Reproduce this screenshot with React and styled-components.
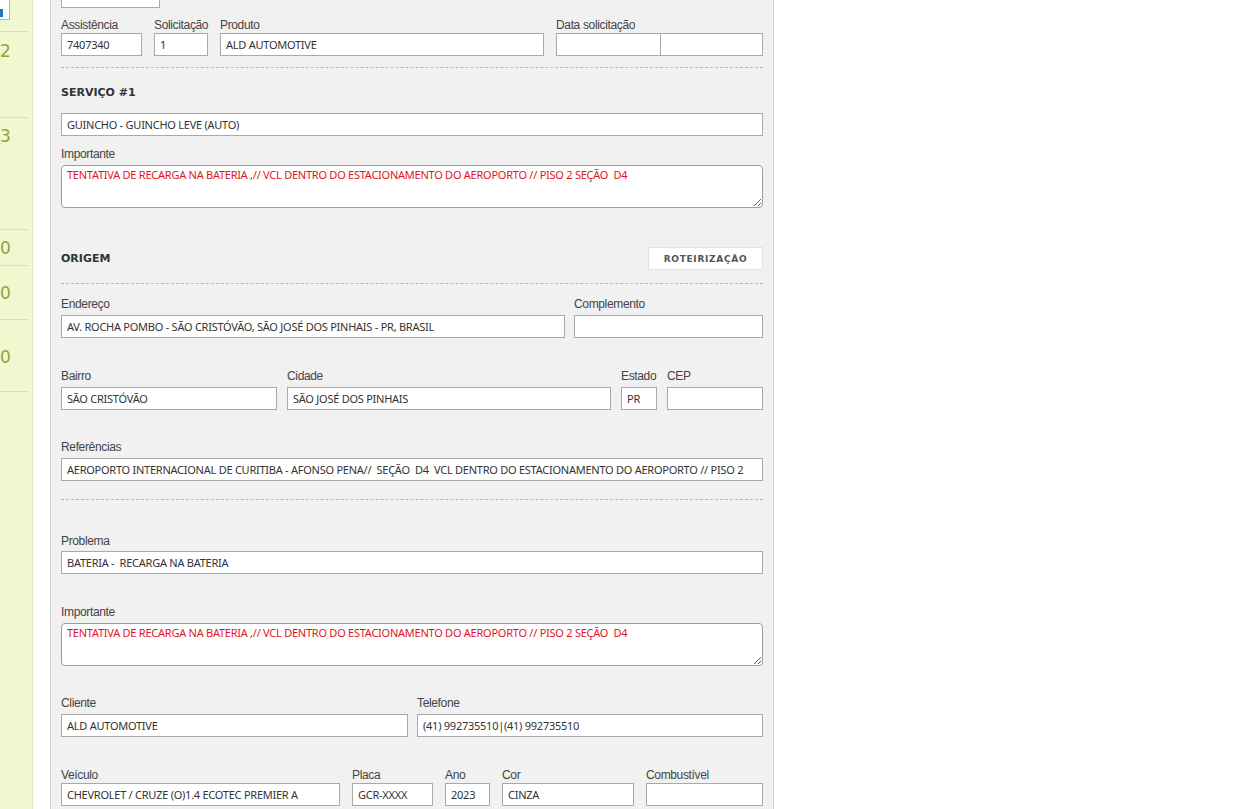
import React from 'react';
import styled, { createGlobalStyle } from 'styled-components';

const GlobalStyle = createGlobalStyle`
  html, body {
    margin: 0;
    padding: 0;
    background: #fff;
  }
  body {
    font-family: "Liberation Sans", Arial, sans-serif;
    overflow: hidden;
  }
`;

const Page = styled.div`
  display: flex;
  align-items: stretch;
  height: 809px;
  overflow: hidden;
`;

const Sidebar = styled.aside`
  width: 32px;
  flex: none;
  background: #f0f8d0;
  border-right: 1px solid #dfe6c4;
  overflow: hidden;
`;

const SideInput = styled.div`
  width: 10px;
  height: 20px;
  background: #fff;
  border: 1px solid #b5b5b5;
  border-left: 0;
  border-top: 0;
  box-sizing: border-box;
  position: relative;
  &::before {
    content: '';
    position: absolute;
    left: 0;
    top: 9px;
    width: 3px;
    height: 8px;
    background: #2a6fc9;
  }
`;

const SideRow = styled.div`
  height: ${({ $h }) => $h}px;
  margin-right: 4px;
  border-bottom: 1px solid #d9e0c2;
  box-sizing: border-box;
  display: flex;
  align-items: ${({ $center }) => ($center ? 'center' : 'flex-start')};
  padding-top: ${({ $pt }) => $pt || 0}px;
  font-size: 17px;
  color: #93a33a;
  font-family: "DejaVu Sans", Verdana, sans-serif;
  line-height: 20px;
`;

const Gap = styled.div`
  width: 17px;
  flex: none;
`;

const Panel = styled.main`
  width: 702px;
  flex: none;
  background: #f1f1f1;
  border-left: 1px solid #d4d4d4;
  border-right: 1px solid #d4d4d4;
  padding: 0 10px;
  overflow: hidden;
`;

const Row = styled.div`
  display: flex;
  align-items: flex-start;
  gap: ${({ $gap }) => $gap || 0}px;
  margin-top: ${({ $mt }) => $mt || 0}px;
`;

const Field = styled.div`
  display: flex;
  flex-direction: column;
  width: ${({ $w }) => ($w ? `${$w}px` : '100%')};
  flex: none;
  margin-top: ${({ $mt }) => $mt || 0}px;
`;

const Label = styled.label`
  display: block;
  font-family: "Liberation Sans", Arial, sans-serif;
  font-size: 12px;
  letter-spacing: -0.35px;
  line-height: 16px;
  color: #444;
  margin-bottom: ${({ $mb }) => ($mb === undefined ? 3 : $mb)}px;
  white-space: nowrap;
`;

const Input = styled.input`
  box-sizing: border-box;
  width: ${({ $w }) => ($w ? `${$w}px` : '100%')};
  height: 23px;
  margin: 0;
  padding: 0 5px;
  border: 1px solid #a9a9a9;
  border-radius: 0;
  background: #fff;
  font-family: "Noto Sans", "DejaVu Sans", sans-serif;
  font-size: 11px;
  letter-spacing: -0.25px;
  color: #333;
  outline: none;
`;

const InputPair = styled.div`
  display: flex;
  ${Input} + ${Input} {
    margin-left: -1px;
  }
`;

const TextArea = styled.textarea`
  box-sizing: border-box;
  display: block;
  width: 100%;
  height: 43px;
  margin: 0;
  padding: 1px 5px;
  border: 1px solid #9c9c9c;
  border-radius: 4px;
  background: #fff;
  font-family: "Noto Sans", "DejaVu Sans", sans-serif;
  font-size: 11px;
  letter-spacing: -0.25px;
  line-height: 15px;
  color: #e0141e;
  resize: vertical;
  outline: none;
`;

const Dashed = styled.hr`
  margin: ${({ $mt }) => $mt || 0}px 0 0;
  border: 0;
  border-top: 1px dashed #b9b9b9;
  height: 0;
`;

const Heading = styled.h3`
  margin: ${({ $mt }) => $mt || 0}px 0 0;
  font-family: "DejaVu Sans", Verdana, sans-serif;
  font-size: 11px;
  font-weight: bold;
  line-height: 16px;
  color: #333;
`;

const SectionHead = styled.div`
  display: flex;
  align-items: center;
  justify-content: space-between;
  height: 23px;
  margin-top: ${({ $mt }) => $mt || 0}px;
`;

const Button = styled.button`
  box-sizing: border-box;
  width: 115px;
  height: 23px;
  background: #fff;
  border: 1px solid #e2e2e2;
  font-family: "DejaVu Sans", Verdana, sans-serif;
  font-size: 9px;
  font-weight: bold;
  letter-spacing: 0.7px;
  color: #555;
  padding: 0;
  cursor: pointer;
`;

const TopStub = styled.div`
  margin-top: -15px;
  width: 99px;
`;

const importante =
  'TENTATIVA DE RECARGA NA BATERIA ,// VCL DENTRO DO ESTACIONAMENTO DO AEROPORTO // PISO 2 SEÇÃO  D4';

const sideRows = [
  { h: 12, text: '' },
  { h: 86, text: '2', pt: 9 },
  { h: 112, text: '3', pt: 8 },
  { h: 36, text: '0', center: true },
  { h: 54, text: '0', pt: 17 },
  { h: 72, text: '0', pt: 27 },
];

function TextField({ label, value, w, mb, ...rest }) {
  return (
    <Field $w={w} {...rest}>
      <Label $mb={mb}>{label}</Label>
      <Input readOnly value={value || ''} />
    </Field>
  );
}

export default function App() {
  return (
    <>
      <GlobalStyle />
      <Page>
        <Sidebar>
          <SideInput />
          {sideRows.map((r, i) => (
            <SideRow key={i} $h={r.h} $pt={r.pt} $center={r.center}>
              {r.text}
            </SideRow>
          ))}
        </Sidebar>
        <Gap />
        <Panel>
          <TopStub>
            <Input readOnly value="" />
          </TopStub>

          <Row $gap={12} $mt={9}>
            <TextField label="Assistência" value="7407340" w={81} mb={0} />
            <TextField label="Solicitação" value="1" w={54} mb={0} />
            <TextField label="Produto" value="ALD AUTOMOTIVE" w={324} mb={0} />
            <Field $w={207}>
              <Label $mb={0}>Data solicitação</Label>
              <InputPair>
                <Input readOnly value="" $w={105} />
                <Input readOnly value="" $w={103} />
              </InputPair>
            </Field>
          </Row>

          <Dashed $mt={11} />
          <Heading $mt={17}>SERVIÇO #1</Heading>
          <Field $mt={12}>
            <Input readOnly value="GUINCHO - GUINCHO LEVE (AUTO)" />
          </Field>
          <Field $mt={10}>
            <Label>Importante</Label>
            <TextArea readOnly value={importante} />
          </Field>

          <SectionHead $mt={39}>
            <Heading>ORIGEM</Heading>
            <Button type="button">ROTEIRIZAÇÃO</Button>
          </SectionHead>
          <Dashed $mt={13} />

          <Row $gap={9} $mt={12}>
            <TextField
              label="Endereço"
              value="AV. ROCHA POMBO - SÃO CRISTÓVÃO, SÃO JOSÉ DOS PINHAIS - PR, BRASIL"
              w={504}
            />
            <TextField label="Complemento" value="" w={189} />
          </Row>

          <Row $gap={10} $mt={30}>
            <TextField label="Bairro" value="SÃO CRISTÓVÃO" w={216} />
            <TextField label="Cidade" value="SÃO JOSÉ DOS PINHAIS" w={324} />
            <TextField label="Estado" value="PR" w={36} />
            <TextField label="CEP" value="" w={96} />
          </Row>

          <TextField
            $mt={29}
            label="Referências"
            value="AEROPORTO INTERNACIONAL DE CURITIBA - AFONSO PENA//  SEÇÃO  D4  VCL DENTRO DO ESTACIONAMENTO DO AEROPORTO // PISO 2"
          />
          <Dashed $mt={18} />

          <TextField $mt={33} label="Problema" value="BATERIA -  RECARGA NA BATERIA" mb={2} />

          <Field $mt={30}>
            <Label>Importante</Label>
            <TextArea readOnly value={importante} />
          </Field>

          <Row $gap={9} $mt={29}>
            <TextField label="Cliente" value="ALD AUTOMOTIVE" w={347} />
            <TextField label="Telefone" value="(41) 992735510|(41) 992735510" w={346} />
          </Row>

          <Row $gap={12} $mt={30}>
            <TextField label="Veículo" value="CHEVROLET / CRUZE (O)1.4 ECOTEC PREMIER A" w={279} mb={0} />
            <TextField label="Placa" value="GCR-XXXX" w={81} mb={0} />
            <TextField label="Ano" value="2023" w={45} mb={0} />
            <TextField label="Cor" value="CINZA" w={132} mb={0} />
            <TextField label="Combustível" value="" w={117} mb={0} />
          </Row>
        </Panel>
      </Page>
    </>
  );
}
